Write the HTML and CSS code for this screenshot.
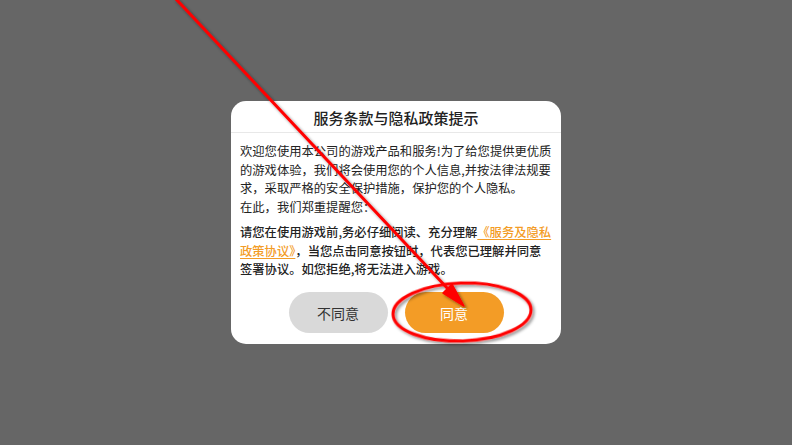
FILE: index.html
```html
<!DOCTYPE html>
<html lang="zh-CN">
<head>
<meta charset="utf-8">
<title>服务条款与隐私政策提示</title>
<link rel="stylesheet" href="styles.css">
</head>
<body>
<div class="screen">
  <div class="dialog">
    <div class="dialog-header">服务条款与隐私政策提示</div>
    <div class="dialog-body">
      <p class="intro">欢迎您使用本公司的游戏产品和服务!为了给您提供更优质<br>的游戏体验，我们将会使用您的个人信息,并按法律法规要<br>求，采取严格的安全保护措施，保护您的个人隐私。<br>在此，我们郑重提醒您：</p>
      <p class="notice">请您在使用游戏前,务必仔细阅读、充分理解<a class="link">《服务及隐私<br>政策协议》</a>，当您点击同意按钮时，代表您已理解并同意<br>签署协议。如您拒绝,将无法进入游戏。</p>
    </div>
    <div class="dialog-actions">
      <button class="btn btn-decline">不同意</button>
      <button class="btn btn-accept">同意</button>
    </div>
  </div>
  <svg class="annotation" width="792" height="445" viewBox="0 0 792 445">
    <defs>
      <filter id="shadow" x="-20%" y="-20%" width="140%" height="140%">
        <feDropShadow dx="2" dy="2" stdDeviation="1.5" flood-color="#000" flood-opacity="0.45"/>
      </filter>
    </defs>
    <g filter="url(#shadow)">
      <line x1="175" y1="-2" x2="449" y2="290" stroke="#ff0000" stroke-width="3"/>
      <polygon points="464,306 452,284 443,293" fill="#ff0000" stroke="#ff0000" stroke-width="1.5" stroke-linejoin="round"/>
      <ellipse cx="462" cy="312" rx="69" ry="29" fill="none" stroke="#ff0000" stroke-width="3" transform="rotate(-2 462 312)"/>
    </g>
  </svg>
</div>
</body>
</html>
```
FILE: styles.css
```css
html, body {
  margin: 0;
  padding: 0;
}
body {
  background: #666666;
  font-family: "Noto Sans CJK SC", "Noto Sans", sans-serif;
}
.screen {
  position: relative;
  width: 792px;
  height: 445px;
  display: flex;
  align-items: center;
  justify-content: center;
  overflow: hidden;
}
.dialog {
  width: 330px;
  background: #ffffff;
  border-radius: 15px;
  display: flex;
  flex-direction: column;
}
.dialog-header {
  height: 31px;
  line-height: 33px;
  text-align: center;
  font-size: 15px;
  font-weight: 500;
  color: #222222;
  border-bottom: 1px solid #e8e8e8;
}
.dialog-body {
  padding: 9px 8px 0 9px;
  font-size: 12.3px;
  line-height: 18.6px;
  color: #222222;
}
.dialog-body p {
  margin: 0;
  white-space: nowrap;
}
.notice {
  margin-top: 7px !important;
  font-weight: 500;
}
.link {
  color: #f39c26;
  text-decoration: underline;
  text-underline-offset: 2px;
}
.dialog-actions {
  display: flex;
  justify-content: center;
  gap: 17px;
  padding: 13px 0 11px;
}
.btn {
  width: 99px;
  height: 41px;
  border: none;
  border-radius: 21px;
  font-family: "Noto Sans CJK SC", "Noto Sans", sans-serif;
  font-size: 14px;
}
.btn-decline {
  background: #d9d9d9;
  color: #333333;
}
.btn-accept {
  background: #f39c26;
  color: #ffffff;
}
.annotation {
  position: absolute;
  left: 0;
  top: 0;
  pointer-events: none;
}
```
